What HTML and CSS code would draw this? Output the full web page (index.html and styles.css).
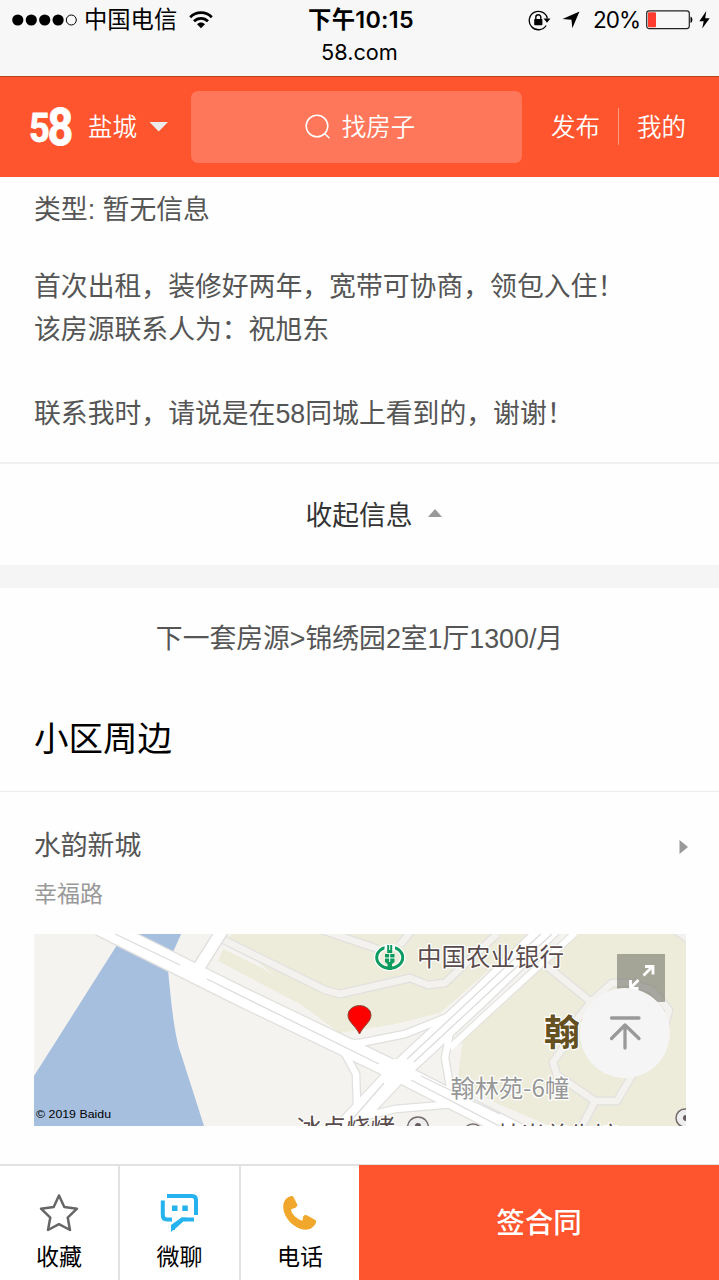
FILE: index.html
```html
<!DOCTYPE html>
<html lang="zh-CN">
<head>
<meta charset="utf-8">
<title>58同城</title>
<link rel="stylesheet" href="styles.css">
</head>
<body>
<div class="screen">
  <div class="browser">
    <div class="status">
      <div class="status-left">
        <svg class="signal" width="65" height="12" viewBox="0 0 65 12"><circle cx="5.8" cy="6" r="5.6"/><circle cx="19.3" cy="6" r="5.6"/><circle cx="32.7" cy="6" r="5.6"/><circle cx="46.1" cy="6" r="5.6"/><circle cx="59.3" cy="6" r="5" fill="none" stroke="#000" stroke-width="1"/></svg>
        <span class="carrier">中国电信</span>
        <svg class="wifi" width="24" height="18" viewBox="0 0 24 18"><g fill="none" stroke="#000" stroke-width="2.7"><path d="M1.2 6.2C7.2.2 16.800.2 22.800 6.200"/><path d="M5 10.300C8.900 6.300 15.100 6.300 19 10.300"/></g><path d="M8 13.200C10.200 11 13.800 11 16 13.200L12 17.200Z"/></svg>
      </div>
      <div class="clock">下午10:15</div>
      <div class="status-right">
        <svg width="23" height="21" viewBox="0 0 23 21"><path d="M18.200 15.500A9.200 9.200 0 1 1 19.400 8.500" fill="none" stroke="#000" stroke-width="1.300"/><path d="M15.500 8.500H22.500L19 12.700Z"/><rect x="6.200" y="9" width="8.200" height="6.300" rx=".8"/><path d="M7.800 9V7.200a2.500 2.500 0 0 1 5 0V9" fill="none" stroke="#000" stroke-width="1.400"/></svg>
        <svg class="arrow" width="18" height="18" viewBox="0 0 18 18"><path d="M17.500.5L10.300 17.200L9.500 8.700L.5 8Z"/></svg>
        <span class="percent">20%</span>
        <svg width="48" height="20" viewBox="0 0 48 20"><rect x=".7" y=".9" width="42.600" height="17.700" rx="2.500" fill="none" stroke="#222" stroke-width="1.200"/><rect x="2" y="2.200" width="8" height="15.100" rx="1" fill="#ff3b30"/><path d="M44.500 6.500c2.500.5 2.500 6 0 6.500Z"/></svg>
        <svg class="bolt" width="11" height="18" viewBox="0 0 11 18"><path d="M7.300 0L.3 10.200H4.700L3.200 17.500L10.700 7.200H6.200Z"/></svg>
      </div>
    </div>
    <div class="address">58.com</div>
  </div>

  <header class="header">
    <svg class="logo" width="46" height="50" viewBox="0 0 46 50"><text class="logo-text" transform="translate(1 0) scale(.88 1)" x="0" y="40"><tspan font-size="41">5</tspan><tspan font-size="51" dx="-2.500" dy="2.500">8</tspan></text></svg>
    <span class="city">盐城</span>
    <svg class="caret" width="20" height="10" viewBox="0 0 20 10"><path d="M.5 0H19L9.700 9.500Z" fill="#ececec"/></svg>
    <div class="search">
      <svg width="26" height="26" viewBox="0 0 26 26" fill="none" stroke="#fff" stroke-width="1.500"><circle cx="12" cy="12" r="10.800"/><path d="M19.800 19.800L24.500 24.200"/></svg>
      <span>找房子</span>
    </div>
    <nav class="links"><a>发布</a><i></i><a>我的</a></nav>
  </header>

  <section class="detail">
    <p class="type">类型: 暂无信息</p>
    <p>首次出租，装修好两年，宽带可协商，领包入住！<br>该房源联系人为：祝旭东<br><br>联系我时，请说是在58同城上看到的，谢谢！</p>
  </section>
  <div class="collapse"><span>收起信息</span><svg width="14" height="8" viewBox="0 0 14 8"><path d="M0 8L7 0L14 8Z" fill="#999"/></svg></div>
  <div class="divider"></div>
  <div class="next">下一套房源&gt;锦绣园2室1厅1300/月</div>
  <h2 class="heading">小区周边</h2>

  <section class="nearby">
    <div class="place"><span>水韵新城</span><svg width="9" height="14" viewBox="0 0 9 14"><path d="M.5 0L9 7L.5 14Z" fill="#999"/></svg></div>
    <div class="road">幸福路</div>
    <div class="map">
      <svg class="map-art" width="652" height="192" viewBox="34 934 652 192">
        <rect x="34" y="934" width="652" height="192" fill="#f4f3ef"/>
        <path fill="#a6bfdf" d="M34 1076L117 945L168 970C171 1000 174 1035 181 1054L204 1126H34ZM130 930H183L173 952L160 950Z"/>
        <g fill="#edecda">
          <path d="M232 934L225 942L250 955L340 1033L395 1024L440 1013L455 1000L530 934Z"/>
          <path d="M570 934H686V1126H550L500 1105L457 1082L463 1040L480 1021Z"/>
          <path d="M223 949L240 957L262 968L340 1020V1033L300 1004L218 961Z"/>
        </g>
        <g fill="none" stroke-linejoin="round">
          <g stroke="#e1e0de" stroke-width="9">
            <path d="M220 938L240 948L325 990L340 994L410 978L428 985L445 983L497 934M322 930L378 949M400 945L412 930"/>
            <path d="M542 962L591 1002L575 1022M591 1002L612 983H632L652 990L669 1010L665 1025M563 1048L553 1062L557 1075L595 1101H617L634 1072M595 1101L580 1130M675 930L690 940"/>
          </g>
          <g stroke="#f3f2ee" stroke-width="6.500">
            <path d="M220 938L240 948L325 990L340 994L410 978L428 985L445 983L497 934M322 930L378 949M400 945L412 930"/>
            <path d="M542 962L591 1002L575 1022M591 1002L612 983H632L652 990L669 1010L665 1025M563 1048L553 1062L557 1075L595 1101H617L634 1072M595 1101L580 1130M675 930L690 940"/>
          </g>
          <g stroke="#e1e0de">
            <path stroke-width="14" d="M198 969L225 926"/>
            <path stroke-width="9" d="M335 1043L360 1043L405 1034L450 1016M343 1050L356 1074L357 1105L351 1130M450 1032L445 1058L451 1092M362 1117L395 1109L455 1104"/>
            <path stroke-width="8" d="M456 1042L482 1018L575 933"/>
            <path stroke-width="21" d="M100 926L240 996L398 1072L530 1139"/>
            <path stroke-width="23" d="M556 922L480 996L398 1072L338 1136"/>
          </g>
          <g stroke="#fff">
            <path stroke-width="11" d="M198 969L225 926"/>
            <path stroke-width="6.500" d="M335 1043L360 1043L405 1034L450 1016M343 1050L356 1074L357 1105L351 1130M450 1032L445 1058L451 1092M362 1117L395 1109L455 1104"/>
            <path stroke-width="6" d="M450 1048L482 1018L575 933"/>
            <path stroke-width="18.500" d="M100 926L240 996L398 1072L530 1139"/>
            <path stroke-width="20.500" d="M556 922L480 996L398 1072L338 1136"/>
          </g>
          <g stroke="#dddcdb" stroke-width="1.300">
            <path d="M115 934L180 965M207 979L379 1064M411 1080L505 1129M407 1059L545 930M414 1062L552 934M384 1083L350 1122M421 1076L500 1114"/>
          </g>
          <path d="M384 1064L394 1059H404L411 1070L408 1077L399 1079L390 1078L381 1073Z" fill="#fff"/>
        </g>
        <g stroke="#fff" stroke-width="2.500" paint-order="stroke" stroke-linejoin="round" class="map-text">
          <text x="417" y="966" font-size="24.500" fill="#5a4c4c">中国农业银行</text>
          <text x="544" y="1046" font-size="36" font-weight="700" fill="#65501f">翰</text>
          <text x="450.500" y="1097" font-size="24.200" fill="#979797">翰林苑-6幢</text>
          <text x="297" y="1137" font-size="24.500" fill="#5a4c4c">冰点烧烤</text>
          <text x="496" y="1145" font-size="24.500" fill="#5a4c4c">林尚养生馆</text>
        </g>
        <text x="36" y="1118" font-size="11" font-family="Liberation Sans, sans-serif" textLength="75" lengthAdjust="spacingAndGlyphs">© 2019 Baidu</text>
        <g fill="#eee" stroke="#746c6c" stroke-width="1.500"><circle cx="418" cy="1127.500" r="10.500"/><circle cx="473" cy="1134" r="10"/><circle cx="685" cy="1118" r="9"/></g>
        <circle cx="418" cy="1126" r="3" fill="#655b5b"/><circle cx="686" cy="1118" r="3" fill="#655b5b"/>
        <g fill="none" stroke="#0c9c60"><ellipse cx="389.700" cy="957.500" rx="13" ry="10.800" stroke="#fff" stroke-width="5.500"/><ellipse cx="389.700" cy="957.500" rx="13" ry="10.800" stroke-width="3"/></g>
        <path d="M384.500 944.500h10.500v6h-10.500Z" fill="#fff"/>
        <path fill="#0c9c60" d="M387.200 945h5v8h-5ZM385 954h9.500v8l-2.500 2v6h-4.500v-6l-2.500-2Z"/><path d="M389.700 945v5M389.700 954v8M384 958h11.500" stroke="#fff" stroke-width="1"/>
        <path d="M359.500 1034C355 1025 348 1022 348 1015a11.500 9.500 0 0 1 23 0C371 1022 364 1025 359.500 1034Z" fill="#f00" stroke="#874b3d" stroke-width="1"/>
        <rect x="617" y="954" width="48" height="48" fill="#77776d" fill-opacity=".62"/>
        <path d="M643.500 975.500L653 966M645 966.500H653V974.500M638.500 980L630 988.500M630.500 980V988.500H638.500" fill="none" stroke="#fff" stroke-width="2.800"/>
      </svg>
      <button class="to-top" aria-label="回到顶部"><svg width="90" height="90" viewBox="0 0 90 90" fill="none" stroke="#999" stroke-width="3.300" stroke-linecap="round" stroke-linejoin="round"><path d="M31.500 30H59M45 60V37.500M31.500 50.500L45 37L59 50.500"/></svg></button>
    </div>
  </section>

  <footer class="bar">
    <div class="tab"><svg width="40" height="40" viewBox="0 0 40 40"><path d="M20 2.500L25.300 14L38 15.700L28.700 24.600L31 37L20 31.200L9 37L11.300 24.600L2 15.700L14.700 14Z" fill="none" stroke="#666" stroke-width="2.500" stroke-linejoin="round"/></svg><span>收藏</span></div>
    <div class="tab"><svg width="40" height="40" viewBox="0 0 40 40"><path d="M7 3H32Q36 3 36 7V22M2.800 7.500V22Q2.800 26.500 7 26.500H12M34 26.500H22.500L13 35V37" fill="none" stroke="#25b3ef" stroke-width="4"/><path d="M12 12.500h5.500v5.500h-5.500ZM22.300 12.500h5.500v5.500h-5.500ZM11 39V32L21.500 24.500H26.500Z" fill="#25b3ef"/></svg><span>微聊</span></div>
    <div class="tab"><svg width="40" height="40" viewBox="0 0 40 40"><path d="M10.500 3.200C12 2.700 13 3.200 13.700 4.500L17 11C17.500 12 17.300 12.800 16.600 13.700C14.700 16 11.500 15 11 17C11.500 21 17.500 26.500 22 27.500C24 27 21.500 23.800 24.500 22.200C25.500 21.700 26.400 21.800 27.300 22.400L35.300 27C36.200 27.700 36.400 28.500 36 29.500C33.500 35.500 28 38 21 36C12 33 4.500 25 3.300 15.500C2.900 9.500 5 5 10.500 3.200Z" fill="#f1a72b"/></svg><span>电话</span></div>
    <div class="sign">签合同</div>
  </footer>
</div>
</body>
</html>
```
FILE: styles.css
```css
* { box-sizing: border-box; }
body { margin: 0; background: #fff; font-family: "Liberation Sans", "Noto Sans CJK SC", sans-serif; }
p, h2 { margin: 0; }
svg { display: block; flex: none; }
.screen { width: 719px; height: 1280px; overflow: hidden; display: flex; flex-direction: column; background: #fefefe; }
.screen > * { flex: none; }

.browser { height: 77px; background: #f7f7f7; border-bottom: 1px solid #b5431f; color: #000; font-family: Inter, "Noto Sans CJK SC", sans-serif; }
.status { display: grid; grid-template-columns: 1fr auto 1fr; height: 39px; align-items: center; padding: 0 9px 0 12px; }
.status-left, .status-right { display: flex; align-items: center; }
.status-right { justify-content: flex-end; }
.carrier { font-size: 23.3px; line-height: 40px; margin: 0 12px 0 7px; }
.clock { font-size: 23.300px; font-weight: 600; line-height: 40px; letter-spacing: .3px; }
.arrow { margin: 0 13px 0 11px; }
.percent { font-size: 22.500px; line-height: 40px; letter-spacing: -1px; margin-right: 6px; }
.bolt { margin-left: 5px; }
.address { text-align: center; font-size: 21.700px; line-height: 27px; }

.header { height: 100px; background: #ff552e; color: #fff; display: flex; align-items: center; padding: 0 0 1px 28px; font-size: 24.500px; font-weight: 350; }
.logo { overflow: visible; }
.logo-text { font-family: Roboto, sans-serif; font-weight: 700; fill: #fff; stroke: #fff; stroke-width: .8; stroke-linejoin: round; }
.header span, .header a { padding-bottom: 3px; }
.city { margin: 0 12px 0 14px; }
.search { width: 331px; height: 72px; margin-left: 22px; padding-left: 7px; border-radius: 7px; background: #ff775a; display: flex; align-items: center; justify-content: center; gap: 11px; }
.links { display: flex; align-items: center; margin-left: 29px; }
.links i { width: 1px; height: 37px; background: #ff9a82; margin: 0 18px; }

.detail { height: 285px; padding: 12px 34px 0; font-size: 26.840px; line-height: 42.300px; color: #555; white-space: nowrap; }
.type { margin-bottom: 35px; }
.collapse { height: 103px; border-top: 2px solid #f0f0f0; padding: 0 0 3px 28px; display: flex; align-items: center; justify-content: center; gap: 15px; font-size: 26.800px; color: #333; }
.divider { height: 23px; background: #f5f5f5; }
.next { height: 100px; line-height: 102px; text-align: center; font-size: 26.800px; color: #555; }
.heading { height: 104px; padding-left: 34px; line-height: 102px; font-size: 34.500px; font-weight: 400; color: #000; border-bottom: 1px solid #ededed; }
.nearby { height: 372px; padding: 32px 33px 0 34px; }
.place { height: 42px; display: flex; align-items: center; justify-content: space-between; margin-right: -2px; font-size: 26.800px; color: #555; }
.place span { padding-bottom: 4px; }
.place svg { margin-top: 4px; }
.road { height: 68px; line-height: 57px; font-size: 23px; color: #999; }
.map { position: relative; width: 652px; height: 192px; }
.map-text { font-family: "Noto Sans CJK SC", sans-serif; }
.to-top { position: absolute; left: 546px; top: 54px; width: 90px; height: 90px; border: 0; padding: 0; border-radius: 50%; background: #f5f5f5; }

.bar { height: 116px; display: flex; border-top: 2px solid #e2e2e2; background: #fff; }
.tab { width: 120px; border-right: 2px solid #e2e2e2; display: flex; flex-direction: column; align-items: center; padding-top: 27px; font-size: 23px; color: #000; }
.tab:nth-child(2) { width: 121px; }
.tab:nth-child(3) { width: 118px; border-right: 0; }
.tab span { line-height: 49px; }
.sign { flex: 1; margin-top: -1px; background: #ff552e; color: #fff; font-size: 28.500px; font-weight: 500; line-height: 117px; text-align: center; }
```
